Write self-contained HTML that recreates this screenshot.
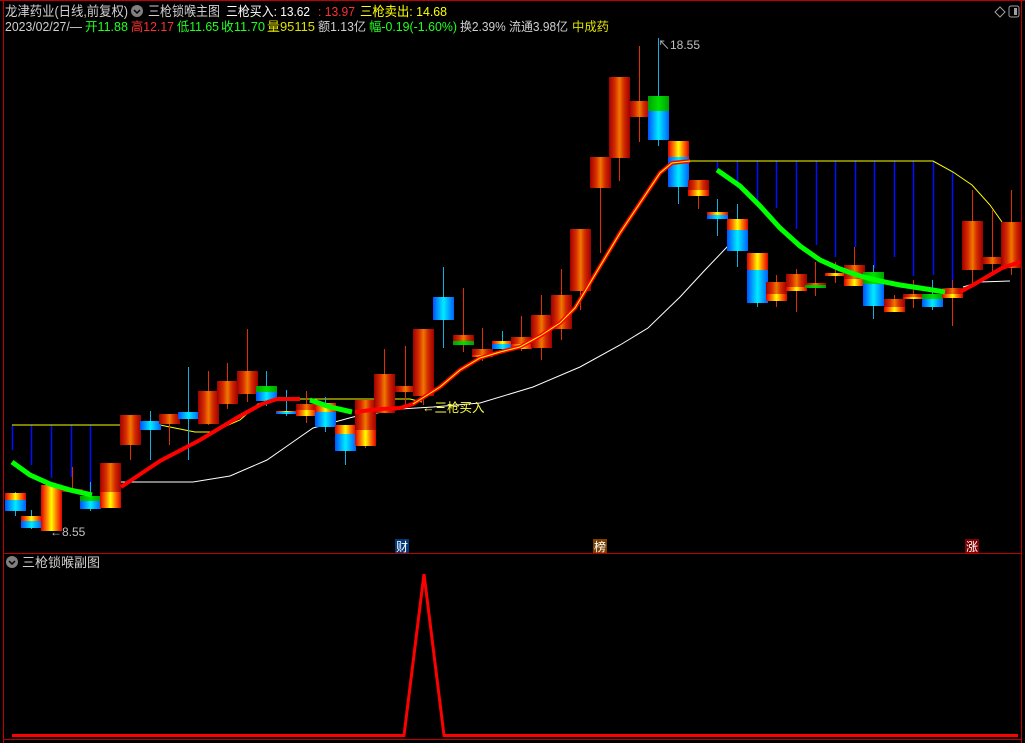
<!DOCTYPE html>
<html><head><meta charset="utf-8">
<style>
html,body{margin:0;padding:0;background:#000;width:1025px;height:743px;overflow:hidden}
svg{display:block}
text{font-family:"Liberation Sans","Noto Sans CJK SC",sans-serif}
</style></head><body>
<svg id="s" width="1025" height="743" xmlns="http://www.w3.org/2000/svg">
<defs>
<linearGradient id="gr" x1="0" x2="1" y1="0" y2="0">
<stop offset="0" stop-color="#a00000"/><stop offset=".3" stop-color="#d83000"/><stop offset=".5" stop-color="#f07800"/><stop offset=".72" stop-color="#d02800"/><stop offset="1" stop-color="#a00000"/></linearGradient>
<linearGradient id="gy" x1="0" x2="1" y1="0" y2="0">
<stop offset="0" stop-color="#e00000"/><stop offset=".28" stop-color="#ff8000"/><stop offset=".5" stop-color="#ffff00"/><stop offset=".72" stop-color="#ff8000"/><stop offset="1" stop-color="#e00000"/></linearGradient>
<linearGradient id="gb" x1="0" x2="1" y1="0" y2="0">
<stop offset="0" stop-color="#0050ff"/><stop offset=".5" stop-color="#00ecff"/><stop offset="1" stop-color="#0060ff"/></linearGradient>
<linearGradient id="gg" x1="0" x2="1" y1="0" y2="0">
<stop offset="0" stop-color="#00a000"/><stop offset=".5" stop-color="#00e000"/><stop offset="1" stop-color="#00a000"/></linearGradient>
</defs>
<rect width="1025" height="743" fill="#000"/>
<line x1="3.5" y1="0" x2="3.5" y2="743" stroke="#c00000"/>
<line x1="1021.5" y1="0" x2="1021.5" y2="743" stroke="#c00000"/>
<line x1="0" y1="0.5" x2="1025" y2="0.5" stroke="#c00000"/>
<line x1="3" y1="553.5" x2="1022" y2="553.5" stroke="#c00000"/>
<line x1="3" y1="739.5" x2="1022" y2="739.5" stroke="#c00000"/>
<g lengthAdjust="spacingAndGlyphs">
<text x="5" y="16" font-size="13.5" fill="#d0d0d0" textLength="123" lengthAdjust="spacingAndGlyphs">龙津药业(日线,前复权)</text>
<circle cx="137" cy="11" r="6" fill="#808080"/><path d="M134 10 l3 3 l3 -3" stroke="#000" stroke-width="1.5" fill="none"/>
<text x="148" y="16" font-size="13.5" fill="#d0d0d0" textLength="72" lengthAdjust="spacingAndGlyphs">三枪锁喉主图</text>
<text x="226" y="16" font-size="13" fill="#fff" textLength="84" lengthAdjust="spacingAndGlyphs">三枪买入: 13.62</text>
<text x="318" y="16" font-size="13" fill="#ff3030" textLength="37" lengthAdjust="spacingAndGlyphs">: 13.97</text>
<text x="360" y="16" font-size="13" fill="#ffff00" textLength="87" lengthAdjust="spacingAndGlyphs">三枪卖出: 14.68</text>
<text x="5" y="31" font-size="12.5" fill="#d0d0d0" textLength="77" lengthAdjust="spacingAndGlyphs">2023/02/27/—</text>
<text x="85" y="31" font-size="12.5" fill="#20ff20" textLength="43" lengthAdjust="spacingAndGlyphs">开11.88</text>
<text x="131" y="31" font-size="12.5" fill="#ff3030" textLength="43" lengthAdjust="spacingAndGlyphs">高12.17</text>
<text x="177" y="31" font-size="12.5" fill="#20ff20" textLength="42" lengthAdjust="spacingAndGlyphs">低11.65</text>
<text x="221" y="31" font-size="12.5" fill="#20ff20" textLength="44" lengthAdjust="spacingAndGlyphs">收11.70</text>
<text x="267" y="31" font-size="12.5" fill="#e0e000" textLength="48" lengthAdjust="spacingAndGlyphs">量95115</text>
<text x="318" y="31" font-size="12.5" fill="#d0d0d0" textLength="48" lengthAdjust="spacingAndGlyphs">额1.13亿</text>
<text x="369" y="31" font-size="12.5" fill="#20ff20" textLength="88" lengthAdjust="spacingAndGlyphs">幅-0.19(-1.60%)</text>
<text x="460" y="31" font-size="12.5" fill="#d0d0d0" textLength="108" lengthAdjust="spacingAndGlyphs">换2.39% 流通3.98亿</text>
<text x="572" y="31" font-size="12.5" fill="#e0e000" textLength="37" lengthAdjust="spacingAndGlyphs">中成药</text>
</g>
<path d="M995 12 l5 -5 l5 5 l-5 5z" stroke="#a0a0a0" fill="none"/>
<rect x="1009" y="6" width="10" height="11" rx="2" stroke="#a0a0a0" fill="none"/><rect x="1014" y="8" width="3" height="7" fill="#a0a0a0"/>
<g id="vl"></g>
<polyline fill="none" stroke="#ffff00" stroke-width="1" points="12,425 160,425 180,429 195,432 212,432 240,420 258,404 277,399 410,399 422,402"/>
<polyline fill="none" stroke="#ffff00" stroke-width="1" points="688,161 933,161 953,172 972,185 990,205 1002,222"/>
<polyline fill="none" stroke="#ffffff" stroke-width="1" points="120,482 193,482 230,476 267,460 290,444 313,428 353,417 400,409 433,407 480,403 533,387 580,367 620,345 648,328 680,297 705,270 727,247 745,228"/>
<polyline fill="none" stroke="#ffffff" stroke-width="1" points="963,287 980,282 1010,281"/>
<g id="cd"></g>
<polyline fill="none" stroke="#ff0000" stroke-width="4" points="121,487 160,461 200,440 240,416 262,404 277,399 300,399"/>
<polyline fill="none" stroke="#ff0000" stroke-width="4" points="355,412 380,409 400,408 413,404 440,387 460,370 480,358 500,352 520,347 540,336 560,323 575,308 590,283 605,258 620,233 640,203 660,173 672,163 690,161"/>
<polyline fill="none" stroke="#ffff00" stroke-width="1" points="413,404 440,387 460,370 480,358 500,352 520,347 540,336 560,323 575,308 590,283 605,258 620,233 640,203 660,173 672,163 690,161"/>
<polyline fill="none" stroke="#ff0000" stroke-width="4" points="960,292 973,285 1002,268 1020,262"/>
<polyline fill="none" stroke="#00ff00" stroke-width="5" points="12,462 30,475 50,484 70,490 92,495"/>
<polyline fill="none" stroke="#00ff00" stroke-width="5" points="310,400 330,407 352,412"/>
<polyline fill="none" stroke="#00ff00" stroke-width="5" points="717,170 740,186 760,206 780,228 800,246 820,260 840,269 860,276 880,281 900,285 920,288 945,292"/>
<text x="50" y="536" font-size="12" fill="#c0c0c0">←8.55</text>
<text x="658" y="49" font-size="12" fill="#c0c0c0">↖18.55</text>
<text x="422" y="412" font-size="12.5" fill="#ffff40">←三枪买入</text>
<rect x="395" y="539" width="14" height="14" fill="#003878"/><text x="396" y="551" font-size="12" fill="#fff">财</text>
<rect x="593" y="539" width="14" height="14" fill="#7a4000"/><text x="594" y="551" font-size="12" fill="#fff">榜</text>
<rect x="965" y="539" width="14" height="14" fill="#800000"/><text x="966" y="551" font-size="12" fill="#fff">涨</text>
<circle cx="12" cy="562" r="6" fill="#808080"/><path d="M9 561 l3 3 l3 -3" stroke="#000" stroke-width="1.5" fill="none"/>
<text x="22" y="567" font-size="13" fill="#d0d0d0">三枪锁喉副图</text>
<polyline fill="none" stroke="#ff0000" stroke-width="3" points="12,735.5 404,735.5 424,574 444,735.5 1018,735.5"/>
</svg>
<script>
var NS="http://www.w3.org/2000/svg";
function el(p,t,a){var e=document.createElementNS(NS,t);for(var k in a)e.setAttribute(k,a[k]);p.appendChild(e);return e;}
var vl=document.getElementById("vl");
[[12,425,450],[31,425,465],[51,425,478],[71,425,477],[90,425,490],[717,161,171],[737,161,188],[757,161,205],[776,161,208],[796,161,229],[816,161,245],[835,161,257],[855,161,247],[874,161,268],[894,161,257],[913,161,276],[933,161,275],[952,172,288]].forEach(function(v){el(vl,"line",{x1:v[0]+.5,x2:v[0]+.5,y1:v[1],y2:v[2],stroke:"#0010ff","stroke-width":1.5});});
var C={r:"url(#gr)",y:"url(#gy)",b:"url(#gb)",g:"url(#gg)"};
var cd=document.getElementById("cd");
var K=[
[5,492,516,[["y",493,500],["b",500,511]]],
[21,510,529,[["y",516,521],["b",521,528]]],
[41,485,531,[["y",485,531]]],
[62,467,492,[["r",489,492]]],
[80,482,511,[["g",496,501],["b",501,509]]],
[100,463,508,[["r",463,492],["y",492,508]]],
[120,415,460,[["r",415,445]]],
[140,411,460,[["b",421,430]]],
[159,414,445,[["r",414,424]]],
[178,367,460,[["b",412,419]]],
[198,371,425,[["r",391,424]]],
[217,363,409,[["r",381,404]]],
[237,329,402,[["r",371,394]]],
[256,371,406,[["g",386,392],["b",392,401]]],
[276,390,416,[["y",411,412],["b",412,414]]],
[296,391,423,[["r",404,410],["y",410,416]]],
[315,397,432,[["y",403,412],["b",412,427]]],
[335,425,465,[["y",425,434],["b",434,451]]],
[355,400,448,[["r",400,430],["y",430,446]]],
[374,349,413,[["r",374,413]]],
[395,346,405,[["r",386,392]]],
[413,329,405,[["r",329,396]]],
[433,267,348,[["b",297,320]]],
[453,288,352,[["r",335,341],["g",341,345]]],
[472,328,361,[["r",349,355],["y",355,357]]],
[492,331,352,[["y",341,344],["b",344,349]]],
[511,316,351,[["r",337,344],["y",344,349]]],
[531,295,360,[["r",315,348]]],
[551,269,340,[["r",295,329]]],
[570,229,310,[["r",229,291]]],
[590,157,253,[["r",157,188]]],
[609,77,181,[["r",77,158]]],
[629,46,142,[["r",101,117]]],
[648,38,146,[["g",96,111],["b",111,140]]],
[668,141,204,[["y",141,157],["b",157,187]]],
[688,180,209,[["r",180,190],["y",190,196]]],
[707,199,236,[["y",212,215],["b",215,219]]],
[727,204,267,[["y",219,230],["b",230,251]]],
[747,253,307,[["y",253,270],["b",270,303]]],
[766,275,307,[["r",282,294],["y",294,301]]],
[786,269,312,[["r",274,287],["y",287,291]]],
[805,262,296,[["r",283,285],["g",285,288]]],
[825,262,283,[["y",273,276]]],
[844,247,286,[["r",265,279],["y",279,286]]],
[863,265,319,[["g",272,284],["b",284,306]]],
[884,295,312,[["r",299,307],["y",307,312]]],
[903,280,308,[["r",294,297],["y",297,299]]],
[922,280,310,[["g",294,299],["b",299,307]]],
[942,280,326,[["r",288,294],["y",294,298]]],
[962,190,283,[["r",221,270]]],
[982,210,275,[["r",257,264]]],
[1001,190,275,[["r",222,268]]]
];
K.forEach(function(k){var blue=k[3].some(function(s){return s[0]=="b"});
el(cd,"line",{x1:k[0]+10.5,x2:k[0]+10.5,y1:k[1],y2:k[2],stroke:blue?"#10b0e0":"#e03000","stroke-width":1});
k[3].forEach(function(s){el(cd,"rect",{x:k[0],y:s[1],width:21,height:Math.max(2,s[2]-s[1]),fill:C[s[0]]});});});
</script>
</body></html>
